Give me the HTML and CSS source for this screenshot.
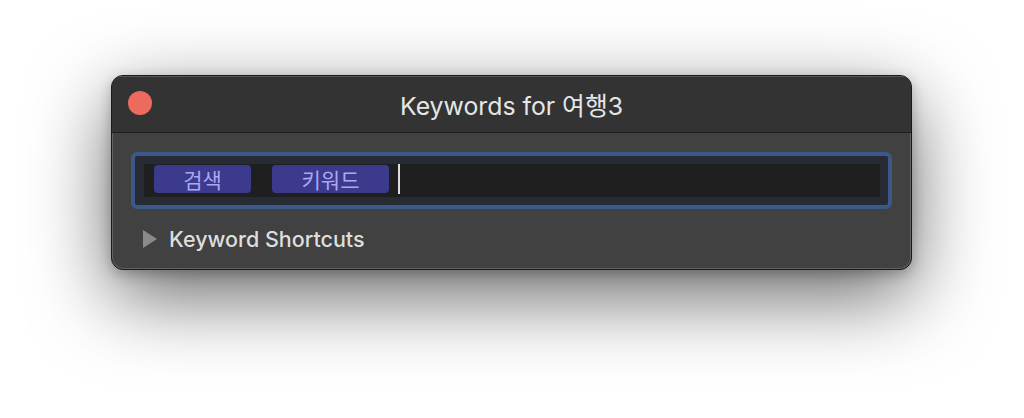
FILE: index.html
```html
<!DOCTYPE html>
<html lang="ko">
<head>
    <meta charset="UTF-8">
    <meta name="viewport" content="width=device-width, initial-scale=1.0">
    <title>Keywords for 여행3</title>
    <link rel="stylesheet" href="styles.css">
</head>
<body>
    <div class="window">
        <div class="titlebar">
            <span class="close-button"></span>
            <span class="title">Keywords for 여행3</span>
        </div>
        <div class="content">
            <div class="field">
                <div class="field-inner">
                    <span class="token token-first">검색</span>
                    <span class="token token-second">키워드</span>
                    <span class="caret"></span>
                </div>
            </div>
            <div class="disclosure">
                <span class="triangle"></span>
                <span class="disclosure-label">Keyword Shortcuts</span>
            </div>
        </div>
    </div>
</body>
</html>
```

FILE: styles.css
```css
body {
    margin: 0;
    padding: 75px 0 0 111px;
    height: 418px;
    box-sizing: border-box;
    background: #ffffff;
    font-family: 'Inter', 'Noto Sans CJK KR', sans-serif;
    overflow: hidden;
}

.window {
    width: 801px;
    box-sizing: border-box;
    border: 1px solid #1a1a1a;
    border-radius: 12px;
    overflow: hidden;
    background: #414141;
    box-shadow: inset 0 0 0 1px rgba(255, 255, 255, 0.18),
                0 26px 80px rgba(0, 0, 0, 0.6),
                0 4px 14px rgba(0, 0, 0, 0.25);
}

.titlebar {
    position: relative;
    height: 56px;
    display: flex;
    align-items: center;
    justify-content: center;
    background: #333333;
    border-bottom: 1px solid #1c1c1c;
    box-shadow: inset 0 1px 0 rgba(255, 255, 255, 0.18);
}

.close-button {
    position: absolute;
    left: 16px;
    top: 15px;
    width: 24px;
    height: 24px;
    border-radius: 50%;
    background: #ed6a5e;
}

.title {
    color: #e6e6e6;
    font-size: 24.8px;
    font-weight: 400;
}

.content {
    padding: 19px 19px 0 19px;
}

.field {
    height: 57px;
    box-sizing: border-box;
    border: 4px solid #3c588a;
    border-radius: 6px;
    background: #272b33;
    padding: 8px 8px 8px 9px;
}

.field-inner {
    height: 33px;
    display: flex;
    align-items: flex-start;
    padding: 1px 0 0 10px;
    box-sizing: border-box;
    background: #1f1f1f;
}

.token {
    height: 28px;
    display: flex;
    align-items: center;
    justify-content: center;
    border-radius: 4px;
    background: #3c3a8c;
    color: #aaa7f5;
    font-size: 21px;
}

.token-first {
    width: 97px;
    margin-right: 21px;
}

.token-second {
    width: 117px;
    margin-right: 9px;
}

.caret {
    width: 2px;
    height: 30px;
    margin-top: -1px;
    background: #dddddd;
}

.disclosure {
    height: 60px;
    display: flex;
    align-items: center;
    padding-left: 12px;
}

.triangle {
    width: 0;
    height: 0;
    border-top: 9px solid transparent;
    border-bottom: 9px solid transparent;
    border-left: 14px solid #8b8b8b;
    margin-right: 12px;
}

.disclosure-label {
    color: #dedede;
    font-size: 21.5px;
    font-weight: 500;
}
```
